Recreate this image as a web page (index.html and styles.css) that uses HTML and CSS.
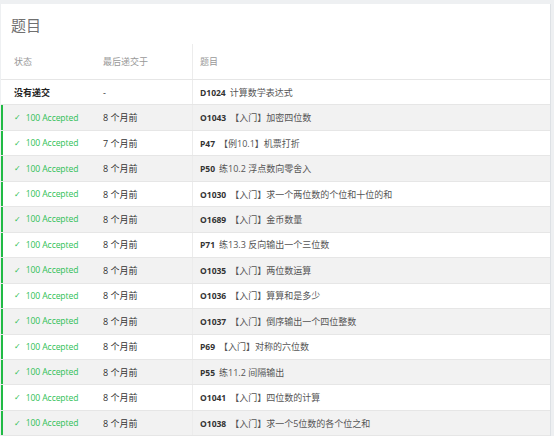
FILE: index.html
```html
<!DOCTYPE html>
<html lang="zh">
<head>
<meta charset="utf-8">
<link rel="stylesheet" href="styles.css">
</head>
<body>
<div class="card">
  <h1 class="title">题目</h1>
  <div class="table">
    <div class="row head">
      <div class="cell c1">状态</div>
      <div class="cell c2">最后递交于</div>
      <div class="cell c3">题目</div>
    </div>
    <div class="row">
      <div class="cell c1 none">没有递交</div>
      <div class="cell c2">-</div>
      <div class="cell c3"><b>D1024</b> 计算数学表达式</div>
    </div>
    <div class="row ac">
      <div class="cell c1"><span class="ok">✓</span><span class="lat">100 Accepted</span></div>
      <div class="cell c2">8 个月前</div>
      <div class="cell c3"><b>O1043</b> 【入门】加密四位数</div>
    </div>
    <div class="row ac">
      <div class="cell c1"><span class="ok">✓</span><span class="lat">100 Accepted</span></div>
      <div class="cell c2">7 个月前</div>
      <div class="cell c3"><b>P47</b> 【例10.1】机票打折</div>
    </div>
    <div class="row ac">
      <div class="cell c1"><span class="ok">✓</span><span class="lat">100 Accepted</span></div>
      <div class="cell c2">8 个月前</div>
      <div class="cell c3"><b>P50</b> 练10.2 浮点数向零舍入</div>
    </div>
    <div class="row ac">
      <div class="cell c1"><span class="ok">✓</span><span class="lat">100 Accepted</span></div>
      <div class="cell c2">8 个月前</div>
      <div class="cell c3"><b>O1030</b> 【入门】求一个两位数的个位和十位的和</div>
    </div>
    <div class="row ac">
      <div class="cell c1"><span class="ok">✓</span><span class="lat">100 Accepted</span></div>
      <div class="cell c2">8 个月前</div>
      <div class="cell c3"><b>O1689</b> 【入门】金币数量</div>
    </div>
    <div class="row ac">
      <div class="cell c1"><span class="ok">✓</span><span class="lat">100 Accepted</span></div>
      <div class="cell c2">8 个月前</div>
      <div class="cell c3"><b>P71</b> 练13.3 反向输出一个三位数</div>
    </div>
    <div class="row ac">
      <div class="cell c1"><span class="ok">✓</span><span class="lat">100 Accepted</span></div>
      <div class="cell c2">8 个月前</div>
      <div class="cell c3"><b>O1035</b> 【入门】两位数运算</div>
    </div>
    <div class="row ac">
      <div class="cell c1"><span class="ok">✓</span><span class="lat">100 Accepted</span></div>
      <div class="cell c2">8 个月前</div>
      <div class="cell c3"><b>O1036</b> 【入门】算算和是多少</div>
    </div>
    <div class="row ac">
      <div class="cell c1"><span class="ok">✓</span><span class="lat">100 Accepted</span></div>
      <div class="cell c2">8 个月前</div>
      <div class="cell c3"><b>O1037</b> 【入门】倒序输出一个四位整数</div>
    </div>
    <div class="row ac">
      <div class="cell c1"><span class="ok">✓</span><span class="lat">100 Accepted</span></div>
      <div class="cell c2">8 个月前</div>
      <div class="cell c3"><b>P69</b> 【入门】对称的六位数</div>
    </div>
    <div class="row ac">
      <div class="cell c1"><span class="ok">✓</span><span class="lat">100 Accepted</span></div>
      <div class="cell c2">8 个月前</div>
      <div class="cell c3"><b>P55</b> 练11.2 间隔输出</div>
    </div>
    <div class="row ac">
      <div class="cell c1"><span class="ok">✓</span><span class="lat">100 Accepted</span></div>
      <div class="cell c2">8 个月前</div>
      <div class="cell c3"><b>O1041</b> 【入门】四位数的计算</div>
    </div>
    <div class="row ac">
      <div class="cell c1"><span class="ok">✓</span><span class="lat">100 Accepted</span></div>
      <div class="cell c2">8 个月前</div>
      <div class="cell c3"><b>O1038</b> 【入门】求一个5位数的各个位之和</div>
    </div>
  </div>
</div>
</body>
</html>
```

FILE: styles.css
```css
html, body {
  margin: 0;
  padding: 0;
  background: #eef0f2;
  font-family: "Open Sans", "Noto Sans CJK SC", sans-serif;
  font-size: 9px;
  color: #333;
  overflow: hidden;
}
.card {
  margin: 4px 0 0 1px;
  width: 549px;
  background: #fff;
  border-right: 1px solid #dde1e5;
  min-height: 440px;
}
.title {
  margin: 0;
  height: 40px;
  box-sizing: border-box;
  padding: 11px 0 0 10px;
  font-family: "Noto Sans CJK SC", sans-serif;
  font-weight: 400;
  font-size: 15px;
  line-height: 20px;
  color: #707070;
}
.row {
  display: grid;
  grid-template-columns: 92px 99px 1fr;
  height: 25.46px;
  box-sizing: border-box;
  border-bottom: 1px solid #e6e6e6;
  align-items: center;
}
.row.head {
  height: 36px;
  color: #999;
}
.row:nth-child(odd):not(.head) {
  background: #f2f2f2;
}
.cell {
  height: 100%;
  display: flex;
  align-items: center;
  white-space: nowrap;
}
.c1 { padding-left: 13px; }
.c2 { padding-left: 10px; }
.c3 {
  padding-left: 7px;
  border-left: 1px solid #ececec;
  color: #555;
}
.head .c3 { color: #999; }
.c3 b {
  color: #333;
  font-weight: 700;
  font-size: 8.5px;
  margin-right: 4px;
}
.none { font-weight: 700; color: #222; }
.ac { box-shadow: inset 2px 0 0 #21ba45; }
.ac .c1 { color: #2fbf56; }
.lat { font-size: 8.6px; letter-spacing: -0.1px; }
.ok {
  font-size: 8px;
  font-weight: 700;
  margin-right: 5px;
  font-family: "DejaVu Sans", sans-serif;
}
```
